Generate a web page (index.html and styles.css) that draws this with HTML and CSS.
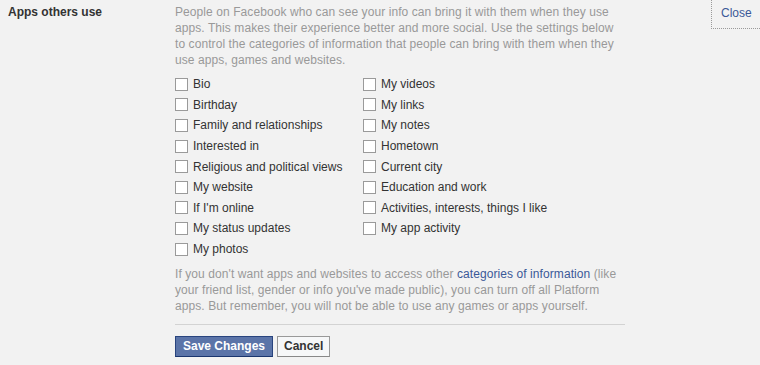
FILE: index.html
```html
<!DOCTYPE html>
<html>
<head>
<meta charset="utf-8">
<link rel="stylesheet" href="styles.css">
</head>
<body>
<div class="row">
  <div class="label">Apps others use</div>
  <div class="content">
    <p class="desc">People on Facebook who can see your info can bring it with them when they use apps. This makes their experience better and more social. Use the settings below to control the categories of information that people can bring with them when they use apps, games and websites.</p>
    <div class="checks">
      <div class="col">
        <label class="item"><input type="checkbox"><span>Bio</span></label>
        <label class="item"><input type="checkbox"><span>Birthday</span></label>
        <label class="item"><input type="checkbox"><span>Family and relationships</span></label>
        <label class="item"><input type="checkbox"><span>Interested in</span></label>
        <label class="item"><input type="checkbox"><span>Religious and political views</span></label>
        <label class="item"><input type="checkbox"><span>My website</span></label>
        <label class="item"><input type="checkbox"><span>If I'm online</span></label>
        <label class="item"><input type="checkbox"><span>My status updates</span></label>
        <label class="item"><input type="checkbox"><span>My photos</span></label>
      </div>
      <div class="col">
        <label class="item"><input type="checkbox"><span>My videos</span></label>
        <label class="item"><input type="checkbox"><span>My links</span></label>
        <label class="item"><input type="checkbox"><span>My notes</span></label>
        <label class="item"><input type="checkbox"><span>Hometown</span></label>
        <label class="item"><input type="checkbox"><span>Current city</span></label>
        <label class="item"><input type="checkbox"><span>Education and work</span></label>
        <label class="item"><input type="checkbox"><span>Activities, interests, things I like</span></label>
        <label class="item"><input type="checkbox"><span>My app activity</span></label>
      </div>
    </div>
    <p class="note">If you don't want apps and websites to access other <a href="#">categories of information</a> (like your friend list, gender or info you've made public), you can turn off all Platform apps. But remember, you will not be able to use any games or apps yourself.</p>
    <div class="sep"></div>
    <div class="buttons">
      <button class="btn primary">Save Changes</button>
      <button class="btn">Cancel</button>
    </div>
  </div>
  <div class="close"><a href="#">Close</a></div>
</div>
</body>
</html>
```

FILE: styles.css
```css
html, body {
  margin: 0;
  padding: 0;
  background: #f2f2f2;
}
body {
  font-family: "Liberation Sans", Arial, sans-serif;
  font-size: 12px;
  line-height: 16px;
  color: #333;
}
.row {
  display: flex;
  align-items: flex-start;
  padding-left: 8px;
}
.label {
  width: 167px;
  padding-top: 4px;
  font-weight: bold;
  color: #333;
}
.content {
  width: 450px;
  padding-top: 4px;
}
.desc {
  margin: 0 0 6px 0;
  color: #999;
  letter-spacing: 0.08px;
}
.checks {
  display: flex;
}
.col {
  display: flex;
  flex-direction: column;
  width: 188px;
}
.item {
  display: flex;
  align-items: center;
  height: 20.6px;
  color: #333;
}
.item input {
  appearance: none;
  -webkit-appearance: none;
  width: 13px;
  height: 13px;
  margin: 0 5px 0 0;
  border: 1px solid #9a9a9a;
  background: #fff;
  box-sizing: border-box;
  flex: none;
}
.note {
  margin: 7px 0 0 0;
  color: #999;
  letter-spacing: 0.08px;
}
.note a {
  color: #3b5998;
  text-decoration: none;
}
.sep {
  height: 1px;
  background: #d3d3d3;
  margin-top: 10px;
}
.buttons {
  display: flex;
  gap: 4px;
  margin-top: 11px;
}
.btn {
  font-family: "Liberation Sans", Arial, sans-serif;
  font-size: 12px;
  font-weight: bold;
  height: 21px;
  padding: 0 6px;
  line-height: 19px;
  border: 1px solid #999;
  border-bottom-color: #888;
  background: #f6f7f8;
  color: #333;
  box-sizing: border-box;
}
.btn.primary {
  width: 98px;
  background: #5b74a8;
  border-color: #29447e #29447e #1a356e;
  color: #fff;
}
.close {
  margin-left: auto;
  width: 49px;
  height: 29px;
  box-sizing: border-box;
  border-left: 1px dotted #9a9a9a;
  border-bottom: 1px dotted #9a9a9a;
  padding: 5px 0 0 9px;
}
.close a {
  color: #3b5998;
  text-decoration: none;
  font-size: 12px;
}
```
